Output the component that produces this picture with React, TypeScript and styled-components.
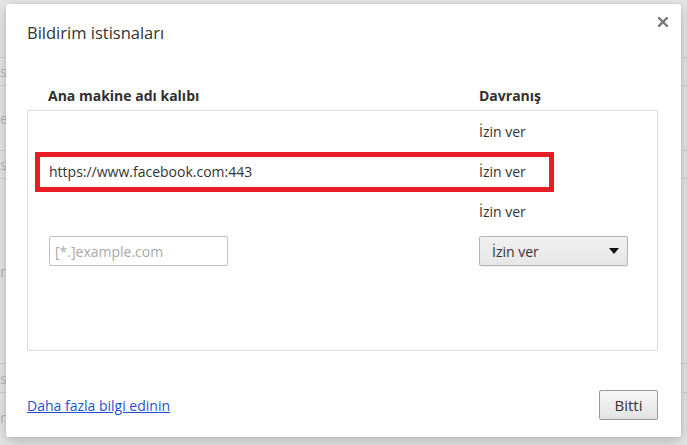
import React from 'react';
import styled, { createGlobalStyle } from 'styled-components';

const GlobalStyle = createGlobalStyle`
  html, body {
    margin: 0;
    padding: 0;
    width: 687px;
    height: 445px;
    overflow: hidden;
    background: #e6e6e6;
    font-family: 'Open Sans', 'Noto Sans', Arial, sans-serif;
  }
`;

const Page = styled.div`
  position: relative;
  width: 687px;
  height: 445px;
  overflow: hidden;
  background: #e6e6e6;
`;

// faint settings page behind the overlay
const BackList = styled.div`
  display: flex;
  flex-direction: column;
  padding-top: 57px;
`;

const BackRow = styled.div<{ h: number }>`
  height: ${p => p.h}px;
  display: flex;
  align-items: center;
  border-top: 1px solid #d2d2d2;
  box-sizing: border-box;
  color: #b8b8b8;
  font-size: 14px;
  white-space: nowrap;
`;

const Dialog = styled.div`
  position: absolute;
  left: 6px;
  top: 4px;
  width: 675px;
  height: 433px;
  box-sizing: border-box;
  background: #fff;
  border-radius: 2px;
  box-shadow: 0 4px 14px rgba(0, 0, 0, 0.22), 0 0 2px rgba(0, 0, 0, 0.12);
  padding: 0 23px 17px 21px;
  display: flex;
  flex-direction: column;
`;

const Title = styled.div`
  color: #333;
  font-size: 16.5px;
  line-height: 22px;
  padding-top: 18px;
  height: 58px;
  box-sizing: border-box;
`;

const CloseButton = styled.div`
  position: absolute;
  right: 8px;
  top: 8px;
  width: 20px;
  height: 20px;
  display: flex;
  align-items: center;
  justify-content: center;
  cursor: pointer;
`;

const HeaderRow = styled.div`
  display: flex;
  height: 48px;
  align-items: flex-end;
  padding: 0 0 5px 21px;
  box-sizing: border-box;
  font-size: 14px;
  font-weight: 700;
  color: #303030;
`;

const PatternHead = styled.div`
  width: 431px;
`;

const ListBox = styled.div`
  position: relative;
  height: 241px;
  box-sizing: border-box;
  border: 1px solid #d9d9d9;
  border-radius: 2px;
  display: flex;
  flex-direction: column;
`;

const Row = styled.div`
  height: 40px;
  flex-shrink: 0;
  display: flex;
  align-items: center;
  padding-left: 21px;
  font-size: 14px;
  color: #333;
`;

const PatternCell = styled.div`
  width: 430px;
`;

const Highlight = styled.div`
  position: absolute;
  left: 7px;
  top: 41px;
  width: 519px;
  height: 40px;
  box-sizing: border-box;
  border: 5px solid #ea1c24;
  pointer-events: none;
`;

const PatternInput = styled.input`
  width: 179px;
  height: 30px;
  box-sizing: border-box;
  border: 1px solid #bfbfbf;
  border-radius: 2px;
  padding: 0 5px;
  margin-right: 251px;
  font-family: inherit;
  font-size: 14px;
  color: #333;
  outline: none;

  &::placeholder {
    color: #a9a9a9;
  }
`;

const Select = styled.div`
  width: 149px;
  height: 30px;
  box-sizing: border-box;
  border: 1px solid #b4b4b4;
  border-radius: 2px;
  background: linear-gradient(#f1f1f1, #e6e6e6);
  box-shadow: 0 1px 0 rgba(0, 0, 0, 0.06);
  display: flex;
  align-items: center;
  justify-content: space-between;
  padding: 0 8px 0 12px;
  font-size: 14px;
  color: #333;
`;

const Footer = styled.div`
  margin-top: auto;
  display: flex;
  align-items: center;
  justify-content: space-between;
`;

const Link = styled.a`
  color: #1f4fd8;
  font-size: 14px;
  text-decoration: underline;
  cursor: pointer;
`;

const Button = styled.button`
  width: 59px;
  height: 30px;
  box-sizing: border-box;
  border: 1px solid #9a9a9a;
  border-radius: 2px;
  background: linear-gradient(#f6f6f6, #e3e3e3);
  font-family: inherit;
  font-size: 15px;
  color: #333;
  padding: 0;
`;

const rows = [
  { pattern: '', action: 'İzin ver' },
  { pattern: 'https://www.facebook.com:443', action: 'İzin ver' },
  { pattern: '', action: 'İzin ver' },
];

const App: React.FC = () => {
  return (
    <Page>
      <GlobalStyle />
      <BackList>
        <BackRow h={28}>stisnaları yönet</BackRow>
        <BackRow h={65}>engelle</BackRow>
        <BackRow h={28}>stisnaları yönet</BackRow>
        <BackRow h={185}>rahatsız etme</BackRow>
        <BackRow h={29}>stisnaları yönet</BackRow>
        <BackRow h={50}>n Aşım</BackRow>
      </BackList>

      <Dialog>
        <Title>Bildirim istisnaları</Title>
        <CloseButton>
          <svg width="10" height="10" viewBox="0 0 10 10">
            <path d="M1 1L9 9M9 1L1 9" stroke="#7a7a7a" strokeWidth="2.4" strokeLinecap="square" />
          </svg>
        </CloseButton>

        <HeaderRow>
          <PatternHead>Ana makine adı kalıbı</PatternHead>
          <div>Davranış</div>
        </HeaderRow>

        <ListBox>
          {rows.map((r, i) => (
            <Row key={i}>
              <PatternCell>{r.pattern}</PatternCell>
              <div>{r.action}</div>
            </Row>
          ))}
          <Row>
            <PatternInput placeholder="[*.]example.com" />
            <Select>
              <span>İzin ver</span>
              <svg width="10" height="6" viewBox="0 0 10 6">
                <path d="M0 0H10L5 6Z" fill="#111" />
              </svg>
            </Select>
          </Row>
          <Highlight />
        </ListBox>

        <Footer>
          <Link>Daha fazla bilgi edinin</Link>
          <Button>Bitti</Button>
        </Footer>
      </Dialog>
    </Page>
  );
};

export default App;
